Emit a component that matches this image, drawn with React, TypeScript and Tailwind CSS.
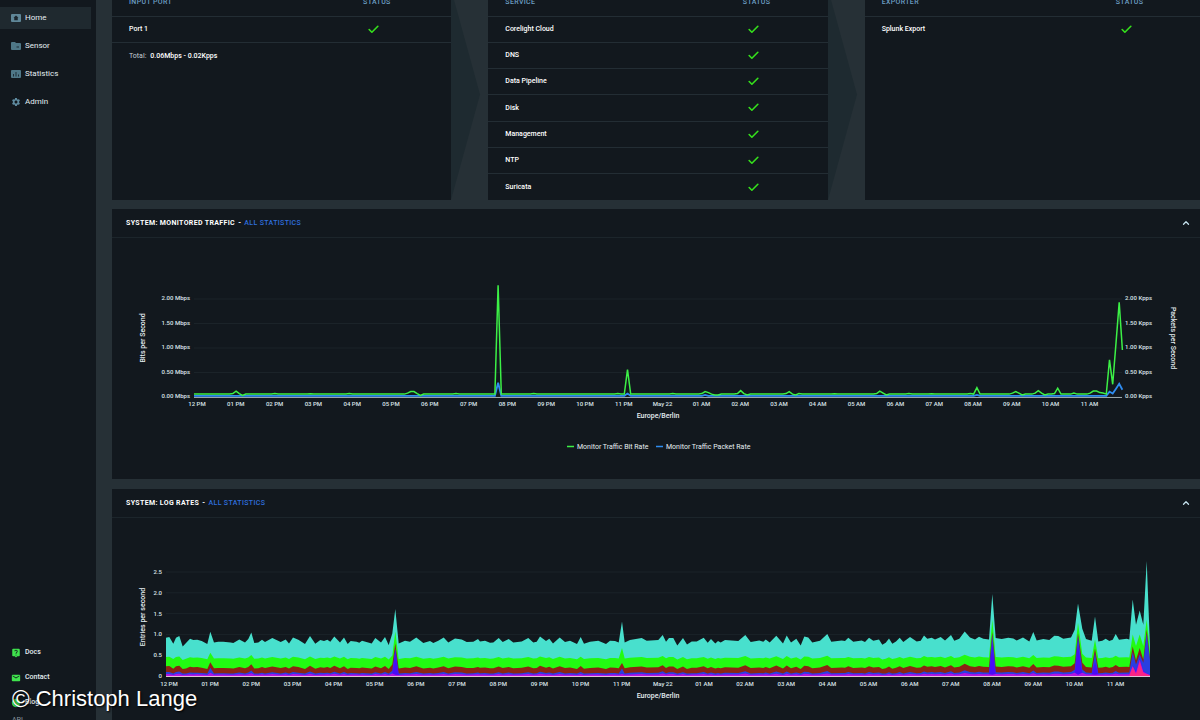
import { Check, ChevronUp } from "lucide-react";
import { ReactNode } from "react";
import { MdCircle, MdEmail, MdLiveHelp, MdSettings } from "react-icons/md";

type Point = [number, number];

interface StatusTableProps {
  title: string;
  rows: string[];
  total?: string;
  fill?: boolean;
}

interface PanelProps {
  title: string;
  children: ReactNode;
}

const HOURS = [
  "12 PM", "01 PM", "02 PM", "03 PM", "04 PM", "05 PM", "06 PM", "07 PM",
  "08 PM", "09 PM", "10 PM", "11 PM", "May 22", "01 AM", "02 AM", "03 AM",
  "04 AM", "05 AM", "06 AM", "07 AM", "08 AM", "09 AM", "10 AM", "11 AM",
];

const SERVICES = [
  "Corelight Cloud",
  "DNS",
  "Data Pipeline",
  "Disk",
  "Management",
  "NTP",
  "Suricata",
];

const HomeIcon = () => (
  <svg viewBox="0 0 20 16" className="w-[10px] h-2">
    <rect width="20" height="16" rx="2" fill="#5f8798" />
    <path d="M10 3l5 4.500h-1.500v5h-7v-5H5z" fill="#1b262d" />
  </svg>
);

const SensorIcon = () => (
  <svg viewBox="0 0 20 16" className="w-[10px] h-2">
    <path d="M2 0h6l2 2h8a2 2 0 0 1 2 2v10a2 2 0 0 1-2 2H2a2 2 0 0 1-2-2V2a2 2 0 0 1 2-2z" fill="#4f7787" />
    <path d="M11 8h5v4h-5z" fill="#35505d" />
  </svg>
);

const StatisticsIcon = () => (
  <svg viewBox="0 0 20 16" className="w-[10px] h-2">
    <rect width="20" height="16" rx="2" fill="#4f7787" />
    <path d="M4 8h2v5H4zM9 4h2v9H9zM14 9h2v4h-2z" fill="#1e2e38" />
  </svg>
);

const MENU = [
  { label: "Home", icon: <HomeIcon />, active: true },
  { label: "Sensor", icon: <SensorIcon /> },
  { label: "Statistics", icon: <StatisticsIcon /> },
  { label: "Admin", icon: <MdSettings size={10} color="#5f8ba0" /> },
];

const LINKS = [
  { label: "Docs", icon: <MdLiveHelp size={10} /> },
  { label: "Contact", icon: <MdEmail size={10} /> },
  { label: "Blog", icon: <MdCircle size={10} /> },
];

const Sidebar = () => (
  <aside className="w-24 shrink-0 h-full flex flex-col overflow-hidden bg-[#12181e] text-[8px] text-[#e4eef2]">
    <nav className="flex flex-col gap-[6px] pt-[7px] pr-[5px]">
      {MENU.map((item) => (
        <a
          key={item.label}
          href="#"
          className={
            item.active
              ? "h-[22px] pl-[11px] flex items-center gap-1 bg-[#1f292f]"
              : "h-[22px] pl-[11px] flex items-center gap-1"
          }
        >
          {item.icon}
          {item.label}
        </a>
      ))}
    </nav>
    <nav className="mt-auto flex flex-col">
      {LINKS.map((item) => (
        <a
          key={item.label}
          href="#"
          className="h-[25px] pl-[11px] flex items-center gap-1 text-[#3fe34d]"
        >
          {item.icon}
          <span className="text-[7px] font-medium text-[#e4eef2]">{item.label}</span>
        </a>
      ))}
    </nav>
    <p className="h-[5px] pl-3 overflow-hidden text-[7px] leading-[10px] text-[#8b979e]">
      API
    </p>
  </aside>
);

const StatusTable = ({ title, rows, total, fill }: StatusTableProps) => (
  <div className="h-[211px] bg-[#12181e]">
    <table
      className={
        fill
          ? "w-full h-full table-fixed text-[7px] text-left text-white"
          : "w-full table-fixed text-[7px] text-left text-white"
      }
    >
      <thead>
        <tr className="h-[27px] border-b border-[#232d34] tracking-wider text-[#6d9fc4]">
          <th className={fill ? "w-[75%] pl-[17px] font-medium" : "w-[74%] pl-[17px] font-medium"}>
            {title}
          </th>
          <th className="font-medium">STATUS</th>
        </tr>
      </thead>
      <tbody>
        {rows.map((row) => (
          <tr key={row} className="h-[26px] border-b border-[#232d34] last:border-0">
            <td className="pl-[17px] font-medium">{row}</td>
            <td className="pl-1">
              <Check size={13} strokeWidth={3} color="#35e01c" />
            </td>
          </tr>
        ))}
      </tbody>
    </table>
    {total && (
      <p className="h-[28px] pl-[17px] flex items-center gap-1 border-t border-[#232d34] text-[7px] text-white">
        <span className="text-[#c3ced4]">Total:</span>
        <span className="font-medium">{total}</span>
      </p>
    )}
  </div>
);

const Arrow = () => (
  <svg viewBox="0 0 37 200" preserveAspectRatio="none" className="w-full h-full">
    <path d="M0 0L29 100L0 200z" fill="#1e2a30" />
  </svg>
);

const Panel = ({ title, children }: PanelProps) => (
  <section className="bg-[#12181e]">
    <header className="h-[29px] pl-[14px] pr-[9px] flex items-center justify-between border-b border-[#1c252b]">
      <h2 className="text-[7px] font-bold tracking-wider text-white">
        {title} <span className="mx-px">-</span>{" "}
        <a href="#" className="font-medium text-[#2f6fdf]">
          ALL STATISTICS
        </a>
      </h2>
      <button type="button" aria-label={`Collapse ${title}`}>
        <ChevronUp size={10} strokeWidth={3} color="#c5e2ee" />
      </button>
    </header>
    {children}
  </section>
);

const HourLabels = ({ start, step, y }: { start: number; step: number; y: number }) => (
  <g fontSize="6" fontWeight="500" fill="#dbe5ea" textAnchor="middle">
    {HOURS.map((hour, i) => (
      <text key={hour} x={start + i * step} y={y}>
        {hour}
      </text>
    ))}
  </g>
);

// traffic is sampled every five minutes, only samples off the base rate are listed
const SAMPLES = 288;

const BIT_RATE: Record<number, number> = {
  12: 0.07, 13: 0.12, 14: 0.07, 15: 0.03, 25: 0.07, 36: 0.065, 48: 0.07,
  66: 0.08, 67: 0.11, 68: 0.11, 69: 0.07, 70: 0.03, 81: 0.07,
  94: 2.28, 105: 0.07, 131: 0.07, 134: 0.56, 148: 0.07,
  157: 0.07, 158: 0.11, 159: 0.09, 161: 0.04, 162: 0.04, 168: 0.07,
  169: 0.13, 170: 0.07, 171: 0.04, 183: 0.07, 184: 0.11, 185: 0.06,
  186: 0.04, 187: 0.07, 198: 0.065, 211: 0.07, 212: 0.12, 213: 0.08,
  214: 0.04, 221: 0.07, 228: 0.065, 240: 0.07, 242: 0.19, 253: 0.08,
  254: 0.11, 255: 0.08, 256: 0.04, 260: 0.08, 261: 0.13, 262: 0.08,
  263: 0.04, 266: 0.07, 267: 0.18, 272: 0.08, 277: 0.08, 278: 0.12,
  279: 0.12, 280: 0.09, 281: 0.08, 282: 0.06, 283: 0.76, 284: 0.26,
  285: 1.1, 286: 1.93, 287: 0.96,
};

const PACKET_RATE: Record<number, number> = {
  94: 0.29, 134: 0.07, 158: 0.04, 242: 0.04, 283: 0.11, 284: 0.07,
  285: 0.17, 286: 0.27, 287: 0.15,
};

const trafficLine = (rates: Record<number, number>, base: number) =>
  Array.from({ length: SAMPLES }, (_, i) => {
    const rate = rates[i] ?? base;
    return `${(82 + i * 3.235).toFixed(1)},${(159 - rate * 49).toFixed(1)}`;
  }).join(" ");

const TrafficChart = () => (
  <svg
    viewBox="0 0 1088 241"
    className="block w-full"
    fontFamily="Roboto, sans-serif"
    role="img"
    aria-label="Monitored traffic"
  >
    {[0, 0.5, 1, 1.5, 2].map((tick) => {
      const y = 159 - tick * 49;
      return (
        <g key={tick} fontSize="6" fontWeight="500" fill="#dbe5ea">
          <path d={`M82 ${y}H1010`} stroke="#1b2329" />
          <text x="78" y={y + 1} textAnchor="end">
            {tick.toFixed(2)} Mbps
          </text>
          <text x="1013" y={y + 1}>
            {tick.toFixed(2)} Kpps
          </text>
        </g>
      );
    })}
    <path d="M82 159.500H1010" stroke="#9aa6a8" />
    <polyline points={trafficLine(PACKET_RATE, 0.025)} fill="none" stroke="#2f8cf0" strokeWidth="1.800" />
    <polyline points={trafficLine(BIT_RATE, 0.06)} fill="none" stroke="#3cf046" strokeWidth="1.500" />
    <HourLabels start={85} step={38.8} y={168} />
    <g fontSize="7" fontWeight="500" fill="#e6eef2">
      <text transform="translate(33 100) rotate(-90)" textAnchor="middle">
        Bits per Second
      </text>
      <text transform="translate(1059 100) rotate(90)" textAnchor="middle">
        Packets per Second
      </text>
      <text x="546" y="180" textAnchor="middle">
        Europe/Berlin
      </text>
      <path d="M455 208.500h7" stroke="#3cf046" strokeWidth="1.500" />
      <text x="465" y="211" fontWeight="400">
        Monitor Traffic Bit Rate
      </text>
      <path d="M544 208.500h7" stroke="#2f8cf0" strokeWidth="1.500" />
      <text x="554" y="211" fontWeight="400">
        Monitor Traffic Packet Rate
      </text>
    </g>
  </svg>
);

// total log rate, [tick, height under the top of each block], three ticks a pixel
const LOG_BLOCKS: { start: number; floor: number; tops: Point[] }[] = [
  {
    start: -168,
    floor: 573,
    tops: [
      [168, 458], [178, 456], [190, 476], [198, 458], [208, 453], [218, 484],
      [228, 474], [240, 461], [250, 465], [262, 464], [275, 468], [292, 477],
      [301, 440], [312, 472], [325, 470], [340, 470], [362, 472], [370, 474],
      [388, 463], [405, 472], [415, 462], [424, 442], [433, 474], [445, 472],
      [456, 464], [465, 471], [487, 459], [512, 471], [527, 463], [537, 475],
      [549, 457], [565, 464], [585, 477], [600, 453], [616, 476], [631, 465],
      [642, 468], [652, 464], [661, 470], [673, 454], [690, 472], [702, 457],
      [713, 477], [722, 468], [740, 470], [748, 473], [756, 467], [785, 475],
      [796, 459], [813, 472], [825, 456], [836, 480], [847, 445], [856, 372],
      [866, 475], [885, 467], [900, 470], [919, 457], [940, 474], [960, 468],
      [970, 474], [985, 467], [1001, 457], [1015, 472], [1035, 460],
      [1055, 463], [1070, 471], [1090, 470], [1104, 462],
    ],
  },
  {
    start: 942,
    floor: 409,
    tops: [
      [0, 305], [15, 303], [30, 309], [40, 308], [56, 295], [68, 307],
      [86, 298], [100, 308], [125, 305], [145, 295], [160, 308], [170, 306],
      [180, 290], [198, 304], [208, 297], [219, 311], [239, 293], [255, 307],
      [270, 303], [291, 313], [302, 292], [312, 312], [330, 306], [355, 303],
      [378, 313], [390, 303], [405, 304], [416, 308], [426, 245], [434, 308],
      [450, 301], [485, 295], [500, 303], [535, 301], [548, 286], [558, 306],
      [567, 295], [580, 295], [592, 317], [609, 295], [621, 314], [635, 305],
      [650, 305], [671, 294], [683, 309], [693, 298], [706, 311], [714, 304],
      [722, 308], [735, 301], [775, 304], [796, 286], [812, 307], [838, 302],
      [850, 306], [857, 299], [869, 308], [889, 288], [909, 311], [920, 287],
      [933, 308], [949, 297], [962, 317], [973, 290], [985, 293], [997, 308],
      [1020, 303], [1042, 283], [1054, 306], [1085, 302], [1095, 304],
      [1105, 294],
    ],
  },
  {
    start: 2052,
    floor: 574,
    tops: [
      [10, 471], [35, 467], [45, 472], [57, 459], [70, 468], [87, 464],
      [97, 480], [107, 474], [117, 461], [127, 477], [138, 470], [149, 459],
      [160, 472], [180, 457], [200, 470], [212, 468], [222, 452], [232, 462],
      [245, 459], [255, 464], [272, 457], [285, 467], [303, 451], [313, 468],
      [328, 462], [344, 440], [360, 458], [375, 464], [387, 456], [400, 462],
      [417, 464], [427, 328], [437, 460], [455, 463], [475, 459], [490, 461],
      [500, 467], [519, 458], [538, 470], [550, 442], [560, 467], [580, 463],
      [598, 466], [613, 453], [625, 454], [640, 462], [663, 458], [674, 435],
      [684, 356], [697, 432], [708, 463], [725, 468], [735, 395], [745, 470],
      [757, 468], [767, 462], [778, 469], [788, 465], [797, 448], [807, 465],
      [830, 462], [838, 464], [848, 344], [858, 420], [869, 377], [880, 420],
      [890, 228], [900, 485],
    ],
  },
];

const TOTAL: Point[] = LOG_BLOCKS.flatMap(({ start, floor, tops }) =>
  tops.map(([x, y]): Point => [start + x, (floor - y) / 125])
);

type Layer = "green" | "brown" | "blue" | "violet" | "magenta" | "pink";

// share of each log type at the bursts
const BURSTS: Record<number, Record<Layer, number>> = {
  133: { green: 0.56, brown: 0.33, blue: 0.2, violet: 0.08, magenta: 0.08, pink: 0 },
  688: { green: 1.07, brown: 0.78, blue: 0.66, violet: 0.6, magenta: 0.03, pink: 0 },
  1368: { green: 0.67, brown: 0.31, blue: 0.18, violet: 0.06, magenta: 0.05, pink: 0 },
  2479: { green: 1.35, brown: 1.06, blue: 1, violet: 0.75, magenta: 0.03, pink: 0 },
  2736: { green: 1.28, brown: 1.03, blue: 0.96, violet: 0.75, magenta: 0.03, pink: 0 },
  2787: { green: 0.88, brown: 0.66, blue: 0.56, violet: 0.35, magenta: 0.03, pink: 0 },
  2900: { green: 1, brown: 0.71, blue: 0.58, violet: 0.24, magenta: 0.24, pink: 0.22 },
  2910: { green: 0.72, brown: 0.38, blue: 0.28, violet: 0.1, magenta: 0.08, pink: 0.05 },
  2921: { green: 1, brown: 0.67, blue: 0.52, violet: 0.42, magenta: 0.4, pink: 0.34 },
  2932: { green: 0.72, brown: 0.4, blue: 0.32, violet: 0.12, magenta: 0.1, pink: 0.08 },
  2942: { green: 1.35, brown: 1.12, blue: 1.02, violet: 0.06, magenta: 0.06, pink: 0.04 },
  2952: { green: 0.6, brown: 0.42, blue: 0.38, violet: 0.02, magenta: 0.02, pink: 0.02 },
};

const layerRate = (layer: Layer, x: number, total: number) => {
  const burst = BURSTS[x];
  if (burst) return burst[layer];
  const extra = total - 0.84;
  if (layer === "green") return 0.43 + extra * 0.35;
  if (layer === "brown") return Math.max(0.17, 0.2 + extra * 0.4);
  if (layer === "blue") return Math.max(0.06, 0.07 + extra * 0.3);
  if (layer === "pink") return 0;
  return Math.max(0.025, 0.035 + extra * 0.15);
};

const areaPath = (rates: Point[]) => {
  const line = rates
    .map(([x, rate]) => `${(54 + x / 3).toFixed(1)} ${(158 - rate * 41.6).toFixed(1)}`)
    .join("L");
  return `M54 158L${line}V158z`;
};

const LAYERS: { name: Layer; color: string }[] = [
  { name: "green", color: "#22fb12" },
  { name: "brown", color: "#8c2414" },
  { name: "blue", color: "#2a3fe0" },
  { name: "violet", color: "#4a0cf6" },
  { name: "magenta", color: "#b414e0" },
  { name: "pink", color: "#fb2484" },
];

const LogChart = () => (
  <svg
    viewBox="0 0 1088 241"
    className="block w-full"
    fontFamily="Roboto, sans-serif"
    role="img"
    aria-label="Log rates"
  >
    {["0", "0.5", "1.0", "1.5", "2.0", "2.5"].map((tick, i) => (
      <g key={tick} fontSize="6" fontWeight="500" fill="#dbe5ea">
        <path d={`M54 ${158 - i * 20.8}H1038`} stroke="#1b2329" />
        <text x="50" y={160 - i * 20.8} textAnchor="end">
          {tick}
        </text>
      </g>
    ))}
    <path d={areaPath(TOTAL)} fill="#48e0cd" />
    {LAYERS.map(({ name, color }) => (
      <path
        key={name}
        d={areaPath(TOTAL.map(([x, total]) => [x, layerRate(name, x, total)]))}
        fill={color}
      />
    ))}
    <path d="M54 158.500H1038" stroke="#e3bfd8" />
    <HourLabels start={57} step={41.15} y={168} />
    <g fontSize="7" fontWeight="500" fill="#e6eef2" textAnchor="middle">
      <text transform="translate(33 99) rotate(-90)">Entries per second</text>
      <text x="546" y="180">
        Europe/Berlin
      </text>
    </g>
  </svg>
);

const App = () => {
  return (
    <div className="relative h-screen flex overflow-hidden bg-[#263036] font-['Roboto',sans-serif]">
      <Sidebar />
      <main className="flex-1 min-w-0 h-full pl-4 overflow-hidden">
        <div className="-mt-[11px] -mr-1 grid grid-cols-[1fr_37px_1fr_37px_1fr]">
          <StatusTable title="INPUT PORT" rows={["Port 1"]} total="0.06Mbps - 0.02Kpps" />
          <Arrow />
          <StatusTable title="SERVICE" rows={SERVICES} fill />
          <Arrow />
          <StatusTable title="EXPORTER" rows={["Splunk Export"]} />
        </div>
        <div className="mt-[9px] flex flex-col gap-[10px]">
          <Panel title="SYSTEM: MONITORED TRAFFIC">
            <TrafficChart />
          </Panel>
          <Panel title="SYSTEM: LOG RATES">
            <LogChart />
          </Panel>
        </div>
      </main>
      <p className="absolute left-3 bottom-2 flex items-center gap-[6px] text-[22px] leading-[26px] text-white font-['Liberation_Sans',sans-serif] [text-shadow:1px_1px_2px_#000]">
        <span className="text-2xl leading-[26px]">©</span>
        <span>Christoph Lange</span>
      </p>
    </div>
  );
};

export default App;
